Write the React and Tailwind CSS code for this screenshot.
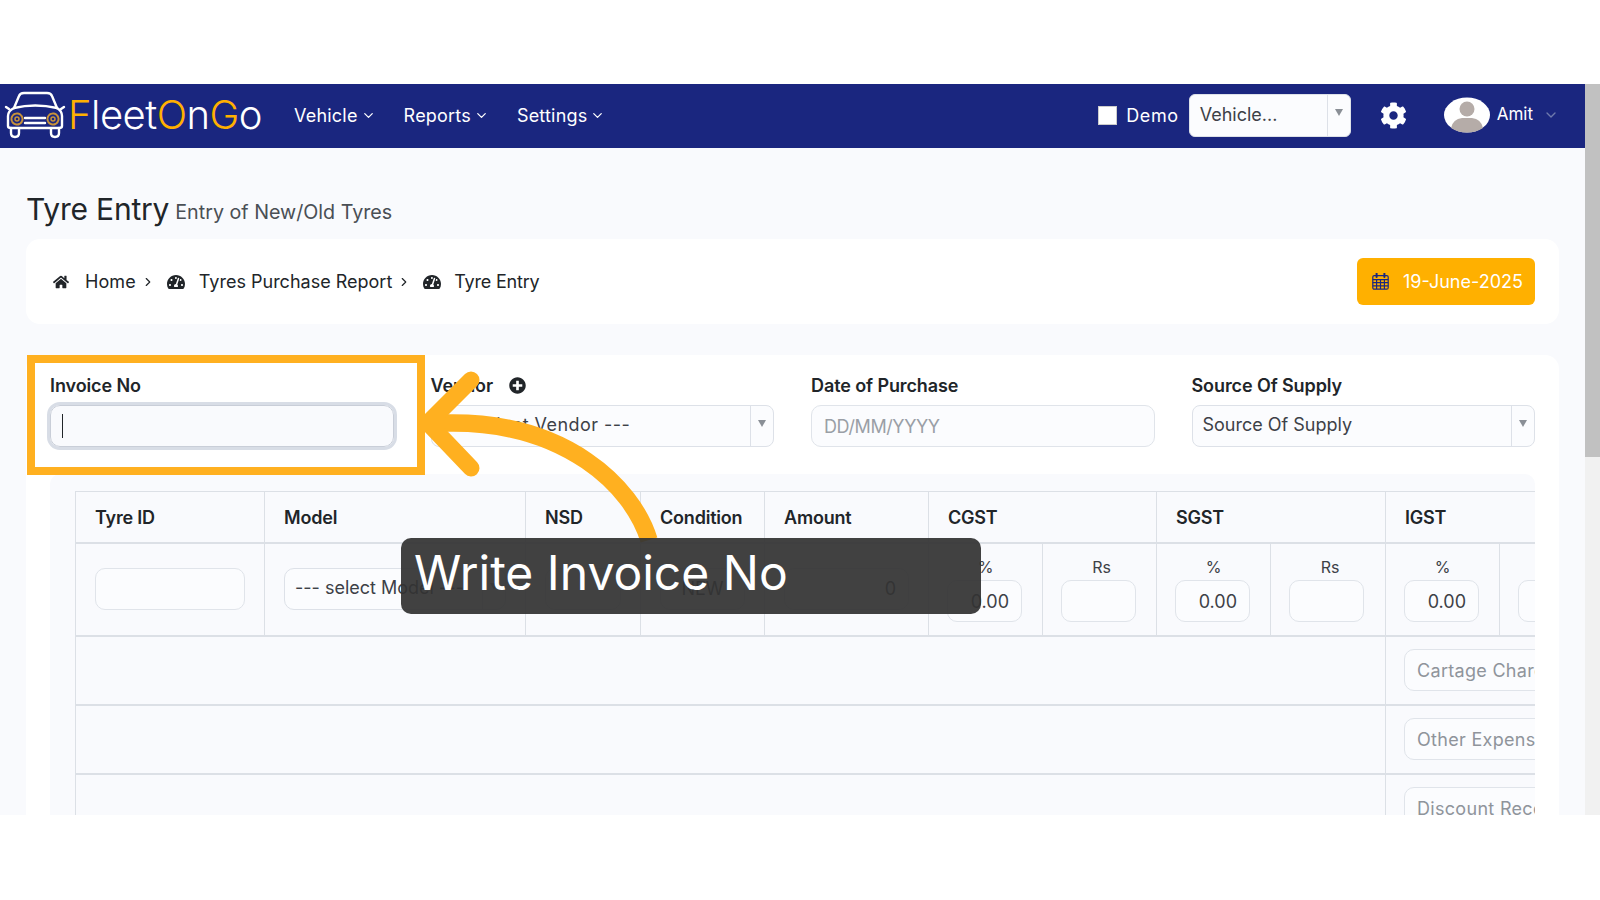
import React from "react";
import { FaHome, FaTachometerAlt, FaPlusCircle, FaCog } from "react-icons/fa";
import { FiChevronDown, FiChevronRight } from "react-icons/fi";

const CarLogo = () => (
  <svg width="64" height="48" viewBox="0 0 62 48" fill="none" stroke="white" strokeWidth="2.4" strokeLinecap="round" strokeLinejoin="round">
    <path d="M10 17 L15 5 Q16 2 20 2 H43 Q47 2 48 5 L53 17" />
    <path d="M10 17 Q31 12 53 17" />
    <path d="M10 17 Q4 20 4 25 V35 Q4 37 7 37 H55 Q58 37 58 35 V25 Q58 20 53 17" />
    <path d="M7 37 V42 Q7 46 11 46 Q15 46 15 42 V38 M47 38 V42 Q47 46 51 46 Q55 46 55 42 V37" />
    <path d="M5 18 L2 16 M57 18 L60 16" />
    <path d="M21 27 H41 M21 32 H41" />
    <circle cx="13" cy="28" r="5.5" stroke="#c8923a" strokeWidth="2" strokeDasharray="2 1" />
    <circle cx="13" cy="28" r="2" stroke="#c8923a" strokeWidth="1.5" />
    <circle cx="49" cy="28" r="5.5" stroke="#c8923a" strokeWidth="2" strokeDasharray="2 1" />
    <circle cx="49" cy="28" r="2" stroke="#c8923a" strokeWidth="1.5" />
  </svg>
);

const Avatar = () => (
  <svg width="46" height="36" viewBox="0 0 46 36">
    <ellipse cx="23" cy="18" rx="23" ry="17.5" fill="white" />
    <circle cx="23" cy="12" r="7.5" fill="#b5aca8" />
    <path d="M7 31 Q9 22 18 21 H28 Q37 22 39 31 Q32 35.5 23 35.5 Q14 35.5 7 31 Z" fill="#b5aca8" />
  </svg>
);

const CalendarIcon = () => (
  <svg width="17" height="17" viewBox="0 0 17 17" fill="none" stroke="#1a267f" strokeWidth="1.2">
    <rect x="0.8" y="2.6" width="15.4" height="13.6" rx="1.5" />
    <path d="M0.8 6.6 H16.2 M0.8 9.6 H16.2 M0.8 12.8 H16.2 M4.6 6.6 V16 M8.5 6.6 V16 M12.4 6.6 V16" />
    <path d="M4.6 0.6 V4 M12.4 0.6 V4" strokeWidth="2" strokeLinecap="round" />
  </svg>
);

const NavItem = ({ label, className }) => (
  <div className={`flex items-center gap-[3px] text-[18px] tracking-[0.2px] text-white ${className}`}>
    {label}
    <FiChevronDown size={15} />
  </div>
);

const Caret = () => (
  <span className="h-0 w-0 border-x-[4px] border-t-[7px] border-x-transparent border-t-[#8a8f96]" />
);

const SelectBox = ({ text, className = "", textClass = "" }) => (
  <div className={`flex h-[42px] items-center rounded-[8px] border border-[#dde1e8] bg-[#fbfcfe] text-[18px] text-[#3d4147] ${className}`}>
    <span className={`mb-[3px] flex-1 truncate pl-[10px] ${textClass}`}>{text}</span>
    <span className="flex h-full w-[23px] items-start justify-center border-l border-[#dde1e8] pt-[14px]">
      <Caret />
    </span>
  </div>
);

const Field = ({ className = "", children }) => (
  <div className={`h-[42px] rounded-[10px] border border-[#e0e4ea] bg-[#fbfcfe] text-[18px] text-[#3d4147] ${className}`}>
    {children}
  </div>
);

const Label = ({ children }) => (
  <div className="flex h-[24px] items-center gap-[16px] text-[18px] font-semibold tracking-[-0.1px] text-[#212529]">{children}</div>
);

const TaxCell = ({ value }) => (
  <td className="border border-b-2 border-[#dce0e6] px-[18px] text-center align-top">
    <div className={`mb-[3px] mt-[13px] text-[16px] leading-[20px] text-[#3d4147] ${value === undefined ? "pl-[4px]" : ""}`}>
      {value === undefined ? "Rs" : "%"}
    </div>
    <Field className="w-[75px] pr-[12px] text-right leading-[41px]">{value}</Field>
  </td>
);

const Head = ({ children, span = 1 }) => (
  <th colSpan={span} className="border border-b-2 border-[#dce0e6] px-[19px] pt-[2px] text-left text-[18px] font-semibold tracking-[-0.2px] text-[#212529]">
    {children}
  </th>
);

const ChargeRow = ({ placeholder }) => (
  <tr className="h-[69px]">
    <td colSpan={9} className="border border-b-2 border-[#dce0e6]" />
    <td colSpan={2} className="border border-b-2 border-[#dce0e6] pl-[18px] pr-[19px]">
      <Field className="w-[200px] truncate pl-[12px] leading-[41px] tracking-[0.3px] text-[#8f949b]">{placeholder}</Field>
    </td>
  </tr>
);

const App = () => {
  return (
    <div className="relative h-[900px] overflow-hidden bg-white font-['Inter','Noto_Sans',sans-serif]">
      <div className="h-[84px]" />
      <div className="flex h-[731px]">
        <div className="min-w-0 flex-1 overflow-hidden bg-[#f9fafd]">
          <header className="flex h-[64px] items-center bg-[#1a267f] pb-[2px] pr-[26px]">
            <div className="ml-[3px] flex items-center">
              <CarLogo />
              <span className="ml-[1px] text-[40px] font-light leading-none tracking-[-0.5px] text-white">
                <span className="text-[#ffb000]">F</span>leet<span className="text-[#ffb000]">O</span>n<span className="text-[#ffb000]">G</span>o
              </span>
            </div>
            <NavItem label="Vehicle" className="ml-[32px]" />
            <NavItem label="Reports" className="ml-[28px]" />
            <NavItem label="Settings" className="ml-[28px]" />
            <div className="ml-auto flex items-center">
              <span className="h-[19px] w-[19px] border border-[#ccc] bg-white" />
              <span className="ml-[9px] text-[18px] tracking-[0.6px] text-white">Demo</span>
              <SelectBox text="Vehicle..." className="ml-[10px] h-[43px] w-[162px] !rounded-[6px]" textClass="!mb-[2px]" />
              <FaCog size={27} className="ml-[29px] text-white" />
              <div className="ml-[37px]"><Avatar /></div>
              <span className="ml-[7px] text-[17px] text-white">Amit</span>
              <FiChevronDown size={16} className="ml-[10px] text-[#6f79ad]" />
            </div>
          </header>

          <main className="px-[26px]">
            <div className="flex h-[91px] items-end pb-[8px] text-[#212529]">
              <h1 className="text-[30px] leading-[44px] tracking-[-0.2px]">Tyre Entry</h1>
              <span className="mb-[3px] ml-[6px] text-[19.7px] text-[#4a4f55]">Entry of New/Old Tyres</span>
            </div>

            <div className="flex h-[85px] items-center rounded-[14px] bg-white pl-[27px] pr-[24px] text-[18px] text-[#212529]">
              <FaHome size={16} />
              <span className="mb-[1px] ml-[16px] tracking-[0.1px]">Home</span>
              <FiChevronRight size={14} className="ml-[5px]" />
              <FaTachometerAlt size={18} className="ml-[12px]" />
              <span className="mb-[1px] ml-[14px]">Tyres Purchase Report</span>
              <FiChevronRight size={14} className="ml-[5px]" />
              <FaTachometerAlt size={18} className="ml-[12px]" />
              <span className="mb-[1px] ml-[13px] tracking-[-0.2px]">Tyre Entry</span>
              <div className="ml-auto flex h-[47px] w-[178px] items-center rounded-[6px] bg-[#ffb000] pl-[15px] text-white">
                <CalendarIcon />
                <span className="ml-[14px]">19-June-2025</span>
              </div>
            </div>

            <section className="mt-[31px] rounded-t-[14px] bg-white px-[24px] pt-[18px]">
              <div className="grid grid-cols-4 gap-x-[37px]">
                <div>
                  <Label>Invoice No</Label>
                  <div className="mt-[8px] h-[42px] rounded-[10px] border border-[#c9ced8] bg-[#f9fafd] pl-[11px] pt-[8px] outline-[3px] outline-[#d8dde6]">
                    <div className="h-[24px] w-px bg-[#212529]" />
                  </div>
                </div>
                <div>
                  <Label>Vendor <FaPlusCircle size={17} /></Label>
                  <SelectBox text="--- Select Vendor ---" className="mt-[8px]" textClass="tracking-[0.45px]" />
                </div>
                <div>
                  <Label>Date of Purchase</Label>
                  <Field className="mt-[8px] pl-[12px] leading-[41px] tracking-[-0.4px] text-[#9a9fa6]">DD/MM/YYYY</Field>
                </div>
                <div>
                  <Label>Source Of Supply</Label>
                  <SelectBox text="Source Of Supply" className="mt-[8px]" />
                </div>
              </div>

              <div className="mt-[27px] h-[400px] overflow-hidden rounded-t-[10px] bg-[#f9fafd] pl-[25px] pt-[17px]">
                <table className="w-[1539px] table-fixed border-collapse">
                  <colgroup>
                    <col className="w-[189px]" />
                    <col className="w-[261px]" />
                    <col className="w-[115px]" />
                    <col className="w-[124px]" />
                    <col className="w-[164px]" />
                    <col className="w-[114px]" />
                    <col className="w-[114px]" />
                    <col className="w-[114px]" />
                    <col className="w-[115px]" />
                    <col className="w-[114px]" />
                    <col className="w-[115px]" />
                  </colgroup>
                  <tbody>
                    <tr className="h-[51px]">
                      <Head>Tyre ID</Head>
                      <Head>Model</Head>
                      <Head>NSD</Head>
                      <Head>Condition</Head>
                      <Head>Amount</Head>
                      <Head span={2}>CGST</Head>
                      <Head span={2}>SGST</Head>
                      <Head span={2}>IGST</Head>
                    </tr>
                    <tr className="h-[93px]">
                      <td className="border border-b-2 border-[#dce0e6] px-[19px]"><Field /></td>
                      <td className="border border-b-2 border-[#dce0e6] px-[19px]">
                        <SelectBox text="--- select Model ---" className="!rounded-[10px]" />
                      </td>
                      <td className="border border-b-2 border-[#dce0e6] px-[19px]"><Field /></td>
                      <td className="border border-b-2 border-[#dce0e6] px-[19px]">
                        <Field className="text-center text-[16px] leading-[40px]">NEW</Field>
                      </td>
                      <td className="border border-b-2 border-[#dce0e6] px-[19px]">
                        <Field className="pr-[12px] text-right leading-[40px]">0</Field>
                      </td>
                      <TaxCell value="0.00" />
                      <TaxCell />
                      <TaxCell value="0.00" />
                      <TaxCell />
                      <TaxCell value="0.00" />
                      <TaxCell />
                    </tr>
                    <ChargeRow placeholder="Cartage Charges" />
                    <ChargeRow placeholder="Other Expenses" />
                    <ChargeRow placeholder="Discount Received" />
                  </tbody>
                </table>
              </div>
            </section>
          </main>
        </div>
        <div className="w-[15px] bg-[#f1f1f1]">
          <div className="h-[373px] bg-[#c1c1c1]" />
        </div>
      </div>

      {/* highlight box, arrow and caption of the walkthrough step */}
      <div className="absolute left-[27px] top-[355px] h-[120px] w-[398px] border-[8px] border-[#ffb020]" />
      <svg className="absolute left-0 top-0" width="1600" height="900" fill="none" stroke="#ffb020" strokeLinecap="round" strokeLinejoin="round">
        <path d="M649 540 C632 485 565 423 453 423 L430 423" strokeWidth="17.5" strokeLinecap="butt" />
        <path d="M471 380 L428 423 L471 468" strokeWidth="17" />
      </svg>
      <div className="absolute left-[401px] top-[538px] flex h-[76px] w-[580px] items-center rounded-[10px] bg-[rgba(51,51,51,0.93)] pb-[6px] pl-[13px] text-[48px] text-white">
        Write Invoice No
      </div>
    </div>
  );
};

export default App;
